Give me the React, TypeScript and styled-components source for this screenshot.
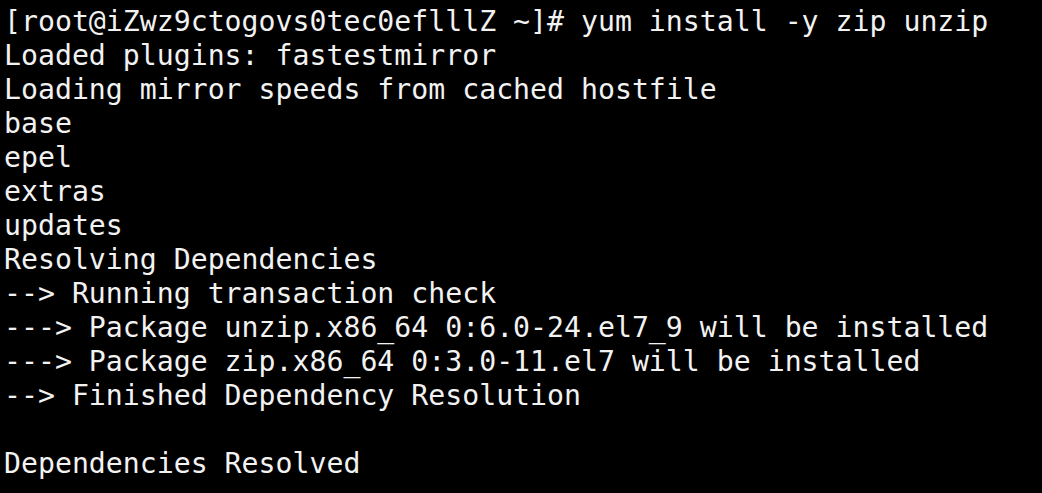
import React from "react";
import styled, { createGlobalStyle } from "styled-components";

const Global = createGlobalStyle`
  html, body { margin: 0; padding: 0; background: #000; }
`;

const Terminal = styled.div`
  background: #000;
  width: 1042px;
  height: 493px;
  box-sizing: border-box;
  padding: 5px 0 0 4px;
  overflow: hidden;
  display: flex;
  flex-direction: column;
`;

const Line = styled.div`
  font-family: "DejaVu Sans Mono", monospace;
  font-size: 28.2px;
  line-height: 34px;
  height: 34px;
  color: #f2f2f2;
  white-space: pre;
`;

const lines = [
  "[root@iZwz9ctogovs0tec0eflllZ ~]# yum install -y zip unzip",
  "Loaded plugins: fastestmirror",
  "Loading mirror speeds from cached hostfile",
  "base",
  "epel",
  "extras",
  "updates",
  "Resolving Dependencies",
  "--> Running transaction check",
  "---> Package unzip.x86_64 0:6.0-24.el7_9 will be installed",
  "---> Package zip.x86_64 0:3.0-11.el7 will be installed",
  "--> Finished Dependency Resolution",
  "",
  "Dependencies Resolved",
];

export default function App() {
  return (
    <>
      <Global />
      <Terminal>
        {lines.map((l, i) => (
          <Line key={i}>{l}</Line>
        ))}
      </Terminal>
    </>
  );
}
